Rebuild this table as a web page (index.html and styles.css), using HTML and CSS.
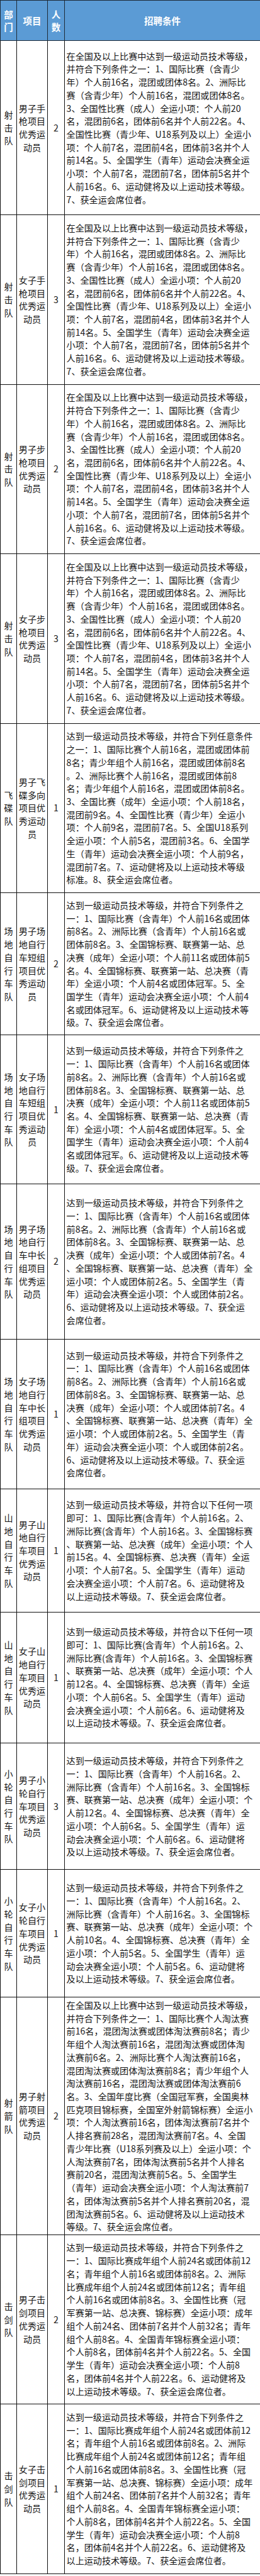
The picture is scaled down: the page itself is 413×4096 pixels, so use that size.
FILE: index.html
```html
<!DOCTYPE html>
<html lang="zh-CN">
<head>
<meta charset="utf-8">
<title>招聘条件</title>
<link rel="stylesheet" href="styles.css">
</head>
<body>
<table class="recruit">
  <colgroup>
    <col class="c-dept">
    <col class="c-item">
    <col class="c-num">
    <col class="c-cond">
  </colgroup>
  <thead>
    <tr class="head">
      <th>部<br>门</th>
      <th>项目</th>
      <th>人<br>数</th>
      <th>招聘条件</th>
    </tr>
  </thead>
  <tbody>
    <tr class="r1">
      <td class="dept">射<br>击<br>队</td>
      <td class="item">男子手<br>枪项目<br>优秀运<br>动员</td>
      <td class="num">2</td>
      <td class="cond">在全国及以上比赛中达到一级运动员技术等级，<br>并符合下列条件之一：1、国际比赛（含青少<br>年）个人前16名，混团或团体8名。2、洲际比<br>赛（含青少年）个人前16名，混团或团体8名。<br>3、全国性比赛（成人）全运小项：个人前20<br>名，混团前6名，团体前6名并个人前22名。4、<br>全国性比赛（青少年、U18系列及以上）全运小<br>项：个人前7名，混团前4名，团体前3名并个人<br>前14名。5、全国学生（青年）运动会决赛全运<br>小项：个人前7名，混团前7名，团体前5名并个<br>人前16名。6、运动健将及以上运动技术等级。<br>7、获全运会席位者。</td>
    </tr>
    <tr class="r12l">
      <td class="dept">射<br>击<br>队</td>
      <td class="item">女子手<br>枪项目<br>优秀运<br>动员</td>
      <td class="num">3</td>
      <td class="cond">在全国及以上比赛中达到一级运动员技术等级，<br>并符合下列条件之一：1、国际比赛（含青少<br>年）个人前16名，混团或团体8名。2、洲际比<br>赛（含青少年）个人前16名，混团或团体8名。<br>3、全国性比赛（成人）全运小项：个人前20<br>名，混团前6名，团体前6名并个人前22名。4、<br>全国性比赛（青少年、U18系列及以上）全运小<br>项：个人前7名，混团前4名，团体前3名并个人<br>前14名。5、全国学生（青年）运动会决赛全运<br>小项：个人前7名，混团前7名，团体前5名并个<br>人前16名。6、运动健将及以上运动技术等级。<br>7、获全运会席位者。</td>
    </tr>
    <tr class="r12l">
      <td class="dept">射<br>击<br>队</td>
      <td class="item">男子步<br>枪项目<br>优秀运<br>动员</td>
      <td class="num">2</td>
      <td class="cond">在全国及以上比赛中达到一级运动员技术等级，<br>并符合下列条件之一：1、国际比赛（含青少<br>年）个人前16名，混团或团体8名。2、洲际比<br>赛（含青少年）个人前16名，混团或团体8名。<br>3、全国性比赛（成人）全运小项：个人前20<br>名，混团前6名，团体前6名并个人前22名。4、<br>全国性比赛（青少年、U18系列及以上）全运小<br>项：个人前7名，混团前4名，团体前3名并个人<br>前14名。5、全国学生（青年）运动会决赛全运<br>小项：个人前7名，混团前7名，团体前5名并个<br>人前16名。6、运动健将及以上运动技术等级。<br>7、获全运会席位者。</td>
    </tr>
    <tr class="r12l">
      <td class="dept">射<br>击<br>队</td>
      <td class="item">女子步<br>枪项目<br>优秀运<br>动员</td>
      <td class="num">3</td>
      <td class="cond">在全国及以上比赛中达到一级运动员技术等级，<br>并符合下列条件之一：1、国际比赛（含青少<br>年）个人前16名，混团或团体8名。2、洲际比<br>赛（含青少年）个人前16名，混团或团体8名。<br>3、全国性比赛（成人）全运小项：个人前20<br>名，混团前6名，团体前6名并个人前22名。4、<br>全国性比赛（青少年、U18系列及以上）全运小<br>项：个人前7名，混团前4名，团体前3名并个人<br>前14名。5、全国学生（青年）运动会决赛全运<br>小项：个人前7名，混团前7名，团体前5名并个<br>人前16名。6、运动健将及以上运动技术等级。<br>7、获全运会席位者。</td>
    </tr>
    <tr class="r12l">
      <td class="dept">飞<br>碟<br>队</td>
      <td class="item">男子飞<br>碟多向<br>项目优<br>秀运动<br>员</td>
      <td class="num">1</td>
      <td class="cond">达到一级运动员技术等级，并符合下列任意条件<br>之一：1、国际比赛个人前16名，混团或团体前<br>8名；青少年组个人前16名，混团或团体前8名<br>。2、洲际比赛个人前16名，混团或团体前8<br>名；青少年组个人前16名，混团或团体前8名。<br>3、全国比赛（成年）全运小项：个人前18名，<br>混团前9名。4、全国性比赛（青少年）全运小<br>项：个人前9名，混团前7名。5、全国U18系列<br>全运小项：个人前5名，混团前3名。6、全国学<br>生（青年）运动会决赛全运小项：个人前9名，<br>混团前7名。7、运动健将及以上运动技术等级<br>标准。8、获全运会席位者。</td>
    </tr>
    <tr class="r6">
      <td class="dept">场<br>地<br>自<br>行<br>车<br>队</td>
      <td class="item">男子场<br>地自行<br>车短组<br>项目优<br>秀运动<br>员</td>
      <td class="num">2</td>
      <td class="cond">达到一级运动员技术等级，并符合下列条件之<br>一：1、国际比赛（含青年）个人前16名或团体<br>前8名。2、洲际比赛（含青年）个人前16名或<br>团体前8名。3、全国锦标赛、联赛第一站、总<br>决赛（成年）全运小项：个人前11名或团体前5<br>名。4、全国锦标赛、联赛第一站、总决赛（青<br>年）全运小项：个人前4名或团体冠军。5、全<br>国学生（青年）运动会决赛全运小项：个人前4<br>名或团体冠军。6、运动健将及以上运动技术等<br>级。7、获全运会席位者。</td>
    </tr>
    <tr class="r7">
      <td class="dept">场<br>地<br>自<br>行<br>车<br>队</td>
      <td class="item">女子场<br>地自行<br>车短组<br>项目优<br>秀运动<br>员</td>
      <td class="num">1</td>
      <td class="cond">达到一级运动员技术等级，并符合下列条件之<br>一：1、国际比赛（含青年）个人前16名或团体<br>前8名。2、洲际比赛（含青年）个人前16名或<br>团体前8名。3、全国锦标赛、联赛第一站、总<br>决赛（成年）全运小项：个人前11名或团体前5<br>名。4、全国锦标赛、联赛第一站、总决赛（青<br>年）全运小项：个人前4名或团体冠军。5、全<br>国学生（青年）运动会决赛全运小项：个人前4<br>名或团体冠军。6、运动健将及以上运动技术等<br>级。7、获全运会席位者。</td>
    </tr>
    <tr class="r8">
      <td class="dept">场<br>地<br>自<br>行<br>车<br>队</td>
      <td class="item">男子场<br>地自行<br>车中长<br>组项目<br>优秀运<br>动员</td>
      <td class="num">2</td>
      <td class="cond">达到一级运动员技术等级，并符合下列条件之<br>一：1、国际比赛（含青年）个人前16名或团体<br>前8名。2、洲际比赛（含青年）个人前16名或<br>团体前8名。3、全国锦标赛、联赛第一站、总<br>决赛（成年）全运小项：个人或团体前7名。4<br>、全国锦标赛、联赛第一站、总决赛（青年）全<br>运小项：个人或团体前2名。5、全国学生（青<br>年）运动会决赛全运小项：个人或团体前2名。<br>6、运动健将及以上运动技术等级。7、获全运<br>会席位者。</td>
    </tr>
    <tr class="r9">
      <td class="dept">场<br>地<br>自<br>行<br>车<br>队</td>
      <td class="item">女子场<br>地自行<br>车中长<br>组项目<br>优秀运<br>动员</td>
      <td class="num">1</td>
      <td class="cond">达到一级运动员技术等级，并符合下列条件之<br>一：1、国际比赛（含青年）个人前16名或团体<br>前8名。2、洲际比赛（含青年）个人前16名或<br>团体前8名。3、全国锦标赛、联赛第一站、总<br>决赛（成年）全运小项：个人或团体前7名。4<br>、全国锦标赛、联赛第一站、总决赛（青年）全<br>运小项：个人或团体前2名。5、全国学生（青<br>年）运动会决赛全运小项：个人或团体前2名。<br>6、运动健将及以上运动技术等级。7、获全运<br>会席位者。</td>
    </tr>
    <tr class="r10">
      <td class="dept">山<br>地<br>自<br>行<br>车<br>队</td>
      <td class="item">男子山<br>地自行<br>车项目<br>优秀运<br>动员</td>
      <td class="num">1</td>
      <td class="cond">达到一级运动员技术等级，并符合以下任何一项<br>即可：1、国际比赛(含青年）个人前16名。2、<br>洲际比赛(含青年）个人前16名。3、全国锦标赛<br>、联赛第一站、总决赛（成年）全运小项：个人<br>前15名。4、全国锦标赛、总决赛（青年）全运<br>小项：个人前7名。5、全国学生（青年）运动<br>会决赛全运小项：个人前7名。6、运动健将及<br>以上运动技术等级。7、获全运会席位者。</td>
    </tr>
    <tr class="r11">
      <td class="dept">山<br>地<br>自<br>行<br>车<br>队</td>
      <td class="item">女子山<br>地自行<br>车项目<br>优秀运<br>动员</td>
      <td class="num">1</td>
      <td class="cond">达到一级运动员技术等级，并符合以下任何一项<br>即可：1、国际比赛(含青年）个人前16名。2、<br>洲际比赛(含青年）个人前16名。3、全国锦标赛<br>、联赛第一站、总决赛（成年）全运小项：个人<br>前12名。4、全国锦标赛、总决赛（青年）全运<br>小项：个人前6名。5、全国学生（青年）运动<br>会决赛全运小项：个人前6名。6、运动健将及<br>以上运动技术等级。7、获全运会席位者。</td>
    </tr>
    <tr class="r12">
      <td class="dept">小<br>轮<br>自<br>行<br>车<br>队</td>
      <td class="item">男子小<br>轮自行<br>车项目<br>优秀运<br>动员</td>
      <td class="num">3</td>
      <td class="cond">达到一级运动员技术等级，并符合下列条件之<br>一：1、国际比赛（含青年）个人前16名。2、<br>洲际比赛（含青年）个人前16名。3、全国锦标<br>赛、联赛第一站、总决赛（成年）全运小项：个<br>人前12名。4、全国锦标赛、总决赛（青年）全<br>运小项：个人前6名。5、全国学生（青年）运<br>动会决赛全运小项：个人前6名。6、运动健将<br>及以上运动技术等级。7、获全运会席位者。</td>
    </tr>
    <tr class="r13">
      <td class="dept">小<br>轮<br>自<br>行<br>车<br>队</td>
      <td class="item">女子小<br>轮自行<br>车项目<br>优秀运<br>动员</td>
      <td class="num">1</td>
      <td class="cond">达到一级运动员技术等级，并符合下列条件之<br>一：1、国际比赛（含青年）个人前16名。2、<br>洲际比赛（含青年）个人前16名。3、全国锦标<br>赛、联赛第一站、总决赛（成年）全运小项：个<br>人前10名。4、全国锦标赛、总决赛（青年）全<br>运小项：个人前5名。5、全国学生（青年）运<br>动会决赛全运小项：个人前5名。6、运动健将<br>及以上运动技术等级。7、获全运会席位者。</td>
    </tr>
    <tr class="r14">
      <td class="dept">射<br>箭<br>队</td>
      <td class="item">男子射<br>箭项目<br>优秀运<br>动员</td>
      <td class="num">2</td>
      <td class="cond">在全国及以上比赛中达到一级运动员技术等级，<br>并符合下列条件之一：1、国际比赛个人淘汰赛<br>前16名，混团淘汰赛或团体淘汰赛前8名；青少<br>年组个人淘汰赛前16名，混团淘汰赛或团体淘<br>汰赛前6名。2、洲际比赛个人淘汰赛前16名，<br>混团淘汰赛或团体淘汰赛前8名；青少年组个人<br>淘汰赛前16名，混团淘汰赛或团体淘汰赛前6<br>名。3、全国年度比赛（全国冠军赛，全国奥林<br>匹克项目锦标赛，全国室外射箭锦标赛）全运小<br>项：个人淘汰赛前16名，团体淘汰赛前7名并个<br>人排名赛前28名，混团淘汰赛前7名。4、全国<br>青少年比赛（U18系列赛及以上）全运小项：个<br>人淘汰赛前7名，团体淘汰赛前5名并个人排名<br>赛前20名，混团淘汰赛前5名。5、全国学生<br>（青年）运动会决赛全运小项：个人淘汰赛前7<br>名，团体淘汰赛前5名并个人排名赛前20名，混<br>团淘汰赛前5名。6、运动健将及以上运动技术<br>等级。7、获全运会席位者。</td>
    </tr>
    <tr class="r15">
      <td class="dept">击<br>剑<br>队</td>
      <td class="item">男子击<br>剑项目<br>优秀运<br>动员</td>
      <td class="num">2</td>
      <td class="cond">达到一级运动员技术等级，并符合下列条件之<br>一：1、国际比赛成年组个人前24名或团体前12<br>名；青年组个人前16名或团体前8名。2、洲际<br>比赛成年组个人前24名或团体前12名；青年组<br>个人前16名或团体前8名。3、全国性比赛（冠<br>军赛第一站、总决赛、锦标赛）全运小项：成年<br>组个人前24名、团体前7名并个人前32名；青年<br>组个人前8名。4、全国青年锦标赛全运小项：<br>个人前8名，团体前4名并个人前22名。5、全国<br>学生（青年）运动会决赛全运小项：个人前8<br>名，团体前4名并个人前22名。6、运动健将及<br>以上运动技术等级。7、获全运会席位者。</td>
    </tr>
    <tr class="r16">
      <td class="dept">击<br>剑<br>队</td>
      <td class="item">女子击<br>剑项目<br>优秀运<br>动员</td>
      <td class="num">1</td>
      <td class="cond">达到一级运动员技术等级，并符合下列条件之<br>一：1、国际比赛成年组个人前24名或团体前12<br>名；青年组个人前16名或团体前8名。2、洲际<br>比赛成年组个人前24名或团体前12名；青年组<br>个人前16名或团体前8名。3、全国性比赛（冠<br>军赛第一站、总决赛、锦标赛）全运小项：成年<br>组个人前24名、团体前7名并个人前32名；青年<br>组个人前8名。4、全国青年锦标赛全运小项：<br>个人前8名，团体前4名并个人前22名。5、全国<br>学生（青年）运动会决赛全运小项：个人前8<br>名，团体前4名并个人前22名。6、运动健将及<br>以上运动技术等级。7、获全运会席位者。</td>
    </tr>
  </tbody>
</table>
</body>
</html>
```
FILE: styles.css
```css
html, body {
  margin: 0;
  padding: 0;
  background: #ffffff;
}

body {
  font-family: "Noto Sans CJK SC", "Noto Sans", sans-serif;
  color: #151515;
}

.recruit {
  width: 413px;
  table-layout: fixed;
  border-collapse: collapse;
  border: 1px solid #111;
}

.c-dept { width: 26px; }
.c-item { width: 49px; }
.c-num  { width: 27px; }
.c-cond { width: 311px; }

.recruit th,
.recruit td {
  border: 1px solid #111;
  padding: 0;
  vertical-align: middle;
}

.head {
  height: 64px;
}

.head th {
  background: #5b9bd5;
  color: #ffffff;
  font-weight: 700;
  font-size: 14.5px;
  line-height: 19.6px;
  text-align: center;
  border-color: #1e2a36;
}

.dept,
.item,
.num {
  text-align: center;
  font-size: 14.1px;
  line-height: 20.7px;
}

.cond {
  font-size: 14.08px;
  line-height: 20.73px;
  white-space: nowrap;
  text-align: left;
  padding: 1px 3px 1px 2.6px !important;
}

.r1   { height: 277px; }
.r12l { height: 269.5px; }
.r6   { height: 226px; }
.r7   { height: 237px; }
.r8   { height: 246.7px; }
.r9   { height: 238.4px; }
.r10  { height: 195.6px; }
.r11  { height: 208px; }
.r12  { height: 201.8px; }
.r13  { height: 202.5px; }
.r14  { height: 378px; }
.r15  { height: 268.8px; }
.r16  { height: 270.2px; }
```
